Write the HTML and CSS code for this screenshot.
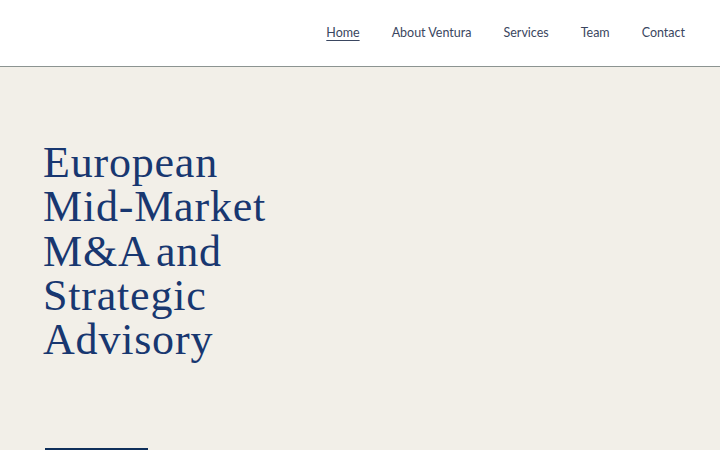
FILE: index.html
```html
<!DOCTYPE html>
<html lang="en">
<head>
    <meta charset="UTF-8">
    <meta name="viewport" content="width=device-width, initial-scale=1.0">
    <title>Ventura Partners</title>
    <link rel="stylesheet" href="styles.css">
</head>
<body>
    <header class="site-header">
        <nav class="nav">
            <a href="#" class="nav-link active">Home</a>
            <a href="#" class="nav-link">About Ventura</a>
            <a href="#" class="nav-link">Services</a>
            <a href="#" class="nav-link">Team</a>
            <a href="#" class="nav-link">Contact</a>
        </nav>
    </header>

    <section class="hero">
        <h1 class="hero-title">European<br>Mid-Market<br>M&amp;A and<br>Strategic<br>Advisory</h1>
        <a href="#" class="hero-btn">Learn more</a>
    </section>
</body>
</html>
```

FILE: styles.css
```css
/* Basic Reset */
* {
    margin: 0;
    padding: 0;
    box-sizing: border-box;
}

body {
    font-family: "Lato", sans-serif;
    background-color: #f2efe8;
    height: 100vh;
    overflow: hidden;
}

/* Header */
.site-header {
    background-color: #ffffff;
    height: 67px;
    border-bottom: 1px solid #8c9491;
    display: flex;
    justify-content: flex-end;
    align-items: center;
    padding: 0 35px 1px 0;
}

.nav {
    display: flex;
    gap: 32px;
}

.nav-link {
    font-size: 12.5px;
    color: #3a4660;
    text-decoration: none;
}

.nav-link.active {
    text-decoration: underline;
    text-underline-offset: 3px;
}

/* Hero */
.hero {
    padding: 74px 0 0 43px;
}

.hero-title {
    font-family: "Liberation Serif", serif;
    font-weight: normal;
    font-size: 44px;
    line-height: 44.3px;
    letter-spacing: 0.8px;
    word-spacing: -4px;
    color: #183770;
}

.hero-btn {
    display: block;
    margin: 86px 0 0 2px;
    width: 103px;
    padding: 22px 0 14px;
    background-color: #0f2f5a;
    color: #ffffff;
    font-size: 13px;
    text-align: center;
    text-decoration: none;
}
```
